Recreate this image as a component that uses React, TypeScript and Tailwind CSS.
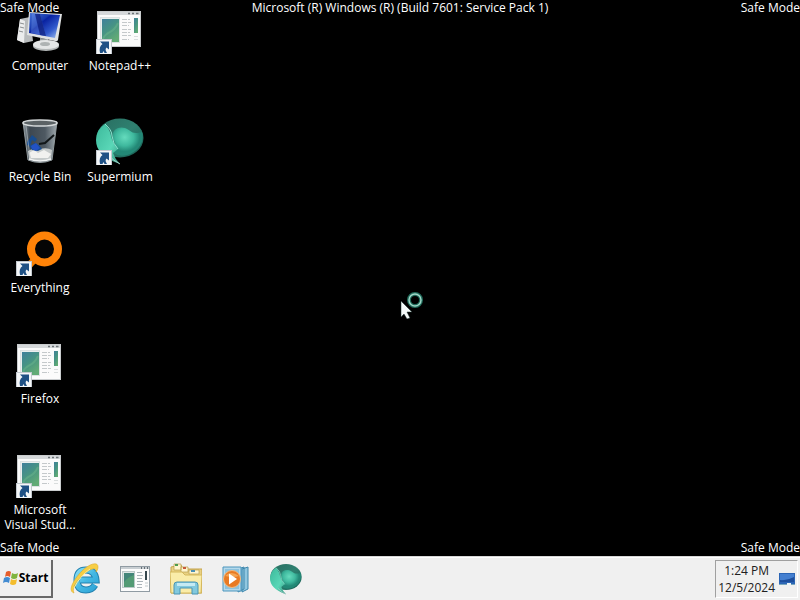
import type { ReactNode } from "react";

function ShortcutArrow() {
  return (
    <g transform="translate(0 33)">
      <rect x="0.5" y="0.5" width="15" height="15" fill="#f4f6f8" stroke="#c3c9cf" />
      <path d="M4 2.500h9v8l-2.500-2C9 10 9.500 11.500 11 14H8.500L7.500 12 6.500 14H4C3 9.500 4 6.500 6.500 5Z" fill="#1f5185" />
    </g>
  );
}

function ProgramWindow() {
  return (
    <svg viewBox="0 0 48 48" className="size-12" aria-hidden="true">
      <defs>
        <linearGradient id="pane" x1="0" y1="0" x2="0.6" y2="1">
          <stop offset="0" stopColor="#3f7f9c" />
          <stop offset="0.5" stopColor="#469384" />
          <stop offset="1" stopColor="#62ab75" />
        </linearGradient>
      </defs>
      <rect x="1.500" y="5.500" width="43" height="35" fill="#fbfbfb" stroke="#c9ccce" />
      <rect x="2" y="6" width="42" height="3" fill="#d5d8da" />
      <path d="M32 7.500h2m2 0h2m2 0h2.500" stroke="#6d7377" strokeWidth="1.500" />
      <rect x="4.500" y="11.500" width="19" height="25" fill="#e9eeee" stroke="#dde2e3" />
      <rect x="6" y="13" width="17" height="23" fill="url(#pane)" />
      <path d="M7 33c4-10 9-3 15-16" stroke="#6cb58b" strokeWidth="2" fill="none" opacity="0.5" />
      <path d="M26 13.500h8m-8 3h9m-9 3h7m-7 4h9m-9 3h8m-8 3h9m-9 4h7" stroke="#c4c9cb" strokeDasharray="5 1" />
      <rect x="38" y="12" width="4" height="15" fill="url(#pane)" />
      <path d="M38 30.500h4m-4 3h4" stroke="#d9dddd" />
      <ShortcutArrow />
    </svg>
  );
}

function SmallProgramWindow() {
  return (
    <svg viewBox="0 0 32 32" className="size-8" aria-hidden="true">
      <rect x="0.500" y="3.500" width="29" height="25" fill="#fcfcfc" stroke="#909ba3" />
      <path d="M1 5h28" stroke="#c8ced2" strokeWidth="2" />
      <path d="M21 5h1m2 0h1m2 0h1" stroke="#47525a" strokeWidth="1.500" />
      <rect x="2.500" y="8.500" width="12" height="16" fill="#dce5e4" stroke="#bbc8c8" />
      <path d="M4 10h10v14H4Z" fill="#428579" />
      <path d="M4 19q4-5 10-7v12H4Z" fill="#539b75" />
      <path d="M17 9.500h5m-5 3h6m-6 3h5m-5 3h6m-6 3h5m-5 3h5" stroke="#aab3b8" />
      <path d="M26 8v9" stroke="#35474e" strokeWidth="2" />
      <path d="M25 20h3m-3 3h3" stroke="#c0c8ca" />
    </svg>
  );
}

function ComputerIcon() {
  return (
    <svg viewBox="0 0 48 48" className="size-12" aria-hidden="true">
      <defs>
        <linearGradient id="screen" x1="0" y1="0" x2="1" y2="1">
          <stop offset="0" stopColor="#4775d9" />
          <stop offset="0.36" stopColor="#1638ad" />
          <stop offset="0.4" stopColor="#0922a0" />
          <stop offset="0.7" stopColor="#3159cc" />
          <stop offset="1" stopColor="#a9c8f5" />
        </linearGradient>
      </defs>
      <path d="M4 13l10-2 3 24-9 2-7-3Z" fill="#b8bbbc" />
      <path d="M4 13l5 2-1 22-7-3Z" fill="#eceded" />
      <path d="M4 17l4 1m-4 3 4 1m-5 3 4 1" stroke="#8b8f91" />
      <path d="M24 32l8 1v6h-8Z" fill="#999e9f" />
      <ellipse cx="30" cy="40" rx="13" ry="5" fill="#b3b7b7" />
      <ellipse cx="30" cy="38.500" rx="13" ry="4.500" fill="#e4e6e6" />
      <ellipse cx="29" cy="38" rx="5" ry="2" fill="#aeb3b3" />
      <path d="M13 6l33 2-4 26q-1 2-3 1L11 29Z" fill="#e0e2e3" />
      <path d="M14 7l30 2-5 23-26-5Z" fill="url(#screen)" />
      <path d="M16 8h8l6 22-15-3Z" fill="#7ba0f2" opacity="0.35" />
      <path d="M19 8h5l6 22-6-1Z" fill="#071777" opacity="0.7" />
    </svg>
  );
}

function RecycleBinIcon() {
  return (
    <svg viewBox="0 0 48 48" className="size-12" aria-hidden="true">
      <defs>
        <linearGradient id="glass">
          <stop offset="0" stopColor="#8c969c" />
          <stop offset="0.2" stopColor="#3d4750" />
          <stop offset="0.65" stopColor="#4e5962" />
          <stop offset="1" stopColor="#a2abb0" />
        </linearGradient>
      </defs>
      <path d="M7 5h34l-5 38q-12 5-24 0Z" fill="url(#glass)" stroke="#929b9e" />
      <ellipse cx="24" cy="6" rx="17" ry="3" fill="#5b6265" stroke="#d5d9da" strokeWidth="1.500" />
      <path d="M12 34q6-4 12-2 7-2 12 1l-1 9q-11 4-22 0Z" fill="#c5caca" />
      <path d="M13 36l5-3 4 3 6-3 7 4-3 4H15Z" fill="#f1f1ef" />
      <path d="M11 25l5-7 5 4-2 3-3-2-2 6-3-1Zm2 4 6-3 4 2 3 4-4 2-6-1Z" fill="#174c8f" />
      <path d="M15 29l5-3 4 5-4 3-4-2Z" fill="#2352c4" />
      <path d="M38 18l-9 8-6 1" fill="none" stroke="#111618" strokeWidth="2" />
      <path d="M10 9l4 31" stroke="#bcc4c7" opacity="0.6" />
      <path d="M13 42q11 4 22 0" fill="none" stroke="#f1f3f3" strokeWidth="1.500" />
    </svg>
  );
}

function SupermiumIcon({ shortcut = false }: { shortcut?: boolean }) {
  return (
    <svg viewBox="0 0 48 48" className={shortcut ? "size-12" : "size-8"} aria-hidden="true">
      <defs>
        <linearGradient id="orb" x1="0" y1="0" x2="1" y2="1">
          <stop offset="0" stopColor="#286d60" />
          <stop offset="0.5" stopColor="#2f8070" />
          <stop offset="1" stopColor="#145b50" />
        </linearGradient>
        <linearGradient id="wedge" x1="0" y1="0" x2="1" y2="1">
          <stop offset="0" stopColor="#3cb99b" />
          <stop offset="0.6" stopColor="#5ad7b7" />
          <stop offset="1" stopColor="#328f7c" />
        </linearGradient>
        <radialGradient id="gem" cx="0.4" cy="0.35">
          <stop offset="0" stopColor="#65dbbd" />
          <stop offset="0.6" stopColor="#3fb99e" />
          <stop offset="1" stopColor="#238876" />
        </radialGradient>
      </defs>
      <ellipse cx="24" cy="21" rx="23.500" ry="19.500" fill="url(#orb)" />
      <path d="M17 21C15 13 22 9 29 11c6 2 6 7 17 4 3 10-4 20-15 23q-8 2-13-2 4-5-1-15Z" fill="url(#gem)" />
      <path d="M9 7Q0 13 0 23c0 10 7 18 24 24q-5-5-7-11l5-4Q16 25 15 19T9 7Z" fill="url(#wedge)" />
      <path d="M9 7q7 6 7 12 1 8 6 13" fill="none" stroke="#8ce3cf" />
      <path d="M12 38q6 6 12 9" fill="none" stroke="#a9cfc8" />
      {shortcut && <ShortcutArrow />}
    </svg>
  );
}

function EverythingIcon() {
  return (
    <svg viewBox="0 0 48 48" className="size-12" aria-hidden="true">
      <path d="M18 32L7 44" stroke="#f57f00" strokeWidth="7" />
      <circle cx="28.500" cy="21" r="13.500" fill="#050505" stroke="#ff8308" strokeWidth="8" />
      <ShortcutArrow />
    </svg>
  );
}

function ExplorerIcon() {
  return (
    <svg viewBox="0 0 32 32" className="size-8" aria-hidden="true">
      <defs>
        <linearGradient id="ieBlue" x1="0" y1="0" x2="1" y2="1">
          <stop offset="0" stopColor="#82daf3" />
          <stop offset="0.5" stopColor="#45b9e4" />
          <stop offset="1" stopColor="#2fa4d6" />
        </linearGradient>
      </defs>
      <path d="M25 22q-3 5-9 5-9 0-9-10Q7 7 16 7q9 0 10 10H10" fill="none" stroke="#2381af" strokeWidth="7" />
      <path d="M25 22q-3 5-9 5-9 0-9-10Q7 7 16 7q9 0 10 10H10" fill="none" stroke="url(#ieBlue)" strokeWidth="5" />
      <path d="M4 30C-3 28 4 16 12 8 19 1 28-2 28 4c0 2-1 4-2 5 1-5-4-4-11 1C8 16 1 25 4 30Z" fill="#f7ce45" stroke="#dfad2a" strokeWidth="0.600" />
      <path d="M4 25Q10 13 20 6" fill="none" stroke="#ffed9a" />
    </svg>
  );
}

function FolderIcon() {
  return (
    <svg viewBox="0 0 32 32" className="size-8" aria-hidden="true">
      <path d="M1 4l10-2 2 4h19v24H1Z" fill="#e9d183" stroke="#c7a44d" />
      <path d="M4 1h7v6H4Zm7 3h7v5h-7Zm8 3h10v4H19Z" fill="#fff5ce" stroke="#b99d4b" strokeWidth="0.700" />
      <path d="M5 2h3" stroke="#4d9b4e" strokeWidth="2" />
      <path d="M13 5h3" stroke="#c75a3c" strokeWidth="2" />
      <path d="M21 8h4" stroke="#4b8fb3" strokeWidth="2" />
      <path d="M0 9h12l3 3h17l-1 18H1Z" fill="#faeca9" stroke="#d4b85d" />
      <path d="M4 31v-9q0-3 3-3h18q3 0 3 3v9h-6v-6H10v6Z" fill="#82c9de" stroke="#4a94b3" />
      <path d="M7 20h18v3H7Z" fill="#c5eaf3" />
    </svg>
  );
}

function MediaIcon() {
  return (
    <svg viewBox="0 0 32 32" className="size-8" aria-hidden="true">
      <path d="M22 6l6-2v22l-6 3Zm-4 0 6-2v22l-6 3Z" fill="#91c7e0" stroke="#3d86ac" />
      <path d="M3 4h18v24H3Z" fill="#b5d9eb" stroke="#4d96bd" />
      <path d="M5 6h14v20H5Z" fill="#8dc2dd" />
      <circle cx="12" cy="16" r="8.500" fill="#e87a23" stroke="#f2bb82" />
      <path d="M5 13q6-6 14 0-5 2-14 0Z" fill="#f4a553" />
      <path d="M9 10.500v11l8-5.500Z" fill="#fff" />
    </svg>
  );
}

function WindowsFlag() {
  return (
    <svg viewBox="0 0 16 16" className="size-4" aria-hidden="true">
      <path d="M3 2q3-2 5 0L7 7Q4 5 2 7Z" fill="#e65d2b" />
      <path d="M9 3q3 2 6 0l-1 5q-3 2-6 0Z" fill="#7fb43d" />
      <path d="M1 8q3-2 6 0l-1 5q-3-2-6 0Z" fill="#428bd1" />
      <path d="M8 9q3 2 6 0l-1 5q-3 2-6 0Z" fill="#f4bd2d" />
    </svg>
  );
}

function DisplayIcon() {
  return (
    <svg viewBox="0 0 16 16" className="size-4" aria-hidden="true">
      <path d="M0 2h16v12H0Z" fill="#2b65b5" />
      <path d="M1 3h14v4Q8 10 1 9Z" fill="#447fd0" />
      <path d="M1 9q7 1 14-3v5H1Z" fill="#1d4e9c" />
      <path d="M0 13.500h8m3 0h5" stroke="#78a6bd" />
      <path d="M8 12h4v2H8Z" fill="#edf4f6" />
    </svg>
  );
}

const shortcuts: { name: string; icon: ReactNode }[] = [
  { name: "Computer", icon: <ComputerIcon /> },
  { name: "Recycle Bin", icon: <RecycleBinIcon /> },
  { name: "Everything", icon: <EverythingIcon /> },
  { name: "Firefox", icon: <ProgramWindow /> },
  { name: "Microsoft Visual Stud...", icon: <ProgramWindow /> },
  { name: "Notepad++", icon: <ProgramWindow /> },
  { name: "Supermium", icon: <SupermiumIcon shortcut /> },
];

const pinned: { name: string; icon: ReactNode }[] = [
  { name: "Internet Explorer", icon: <ExplorerIcon /> },
  { name: "Program", icon: <SmallProgramWindow /> },
  { name: "Windows Explorer", icon: <FolderIcon /> },
  { name: "Windows Media Player", icon: <MediaIcon /> },
  { name: "Supermium", icon: <SupermiumIcon /> },
];

export default function App() {
  return (
    <div className="flex h-screen flex-col overflow-hidden bg-black font-['Open_Sans','Noto_Sans',sans-serif] text-xs">
      <main className="relative min-h-0 flex-1 text-white">
        <div className="grid h-full grid-flow-col grid-rows-[repeat(5,111px)] content-start justify-start">
          {shortcuts.map((item) => (
            <button key={item.name} type="button" className="flex w-20 flex-col items-center gap-1 px-1 pt-1.5 leading-[15px]">
              {item.icon}
              <span>{item.name}</span>
            </button>
          ))}
        </div>
        <span className="absolute top-0 left-0 leading-4">Safe Mode</span>
        <span className="absolute inset-x-0 top-0 text-center leading-4">
          Microsoft (R) Windows (R) (Build 7601: Service Pack 1)
        </span>
        <span className="absolute top-0 right-0 leading-4">Safe Mode</span>
        <span className="absolute bottom-0 left-0 leading-4">Safe Mode</span>
        <span className="absolute right-0 bottom-0 leading-4">Safe Mode</span>
        <svg viewBox="0 0 24 28" className="absolute top-[291px] left-1/2 h-7 w-6" aria-hidden="true">
          <circle cx="15" cy="9" r="6" fill="none" stroke="#1f6a5a" strokeWidth="4" />
          <circle cx="15" cy="9" r="6" fill="none" stroke="#9fd6c6" strokeWidth="1.500" />
          <path d="M1 10v16l3-3 3 5 3-1-3-6h5Z" fill="#f5fbfa" stroke="#18302e" strokeWidth="0.500" />
        </svg>
      </main>
      <footer className="flex h-11 shrink-0 items-center border-t border-[#d8d8d8] bg-[#f0f0f0] text-[#202020] shadow-[inset_0_1px_0_#ffffff]">
        <button type="button" className="flex h-[38px] w-[53px] items-center justify-center border-r-2 border-b-2 border-r-[#696969] border-b-[#696969] font-['Open_Sans',sans-serif] font-bold text-black">
          <WindowsFlag />
          <span>Start</span>
        </button>
        <nav className="flex flex-1 gap-[18px] pl-[17px]" aria-label="Pinned programs">
          {pinned.map((item) => (
            <button key={item.name} type="button" aria-label={item.name}>
              {item.icon}
            </button>
          ))}
        </nav>
        <div className="mr-0.5 flex h-[38px] items-center gap-1 border border-t-[#a0a0a0] border-r-white border-b-white border-l-[#a0a0a0] px-0.5">
          <time className="text-center leading-[17px]">
            1:24 PM
            <br />
            12/5/2024
          </time>
          <DisplayIcon />
        </div>
      </footer>
    </div>
  );
}
